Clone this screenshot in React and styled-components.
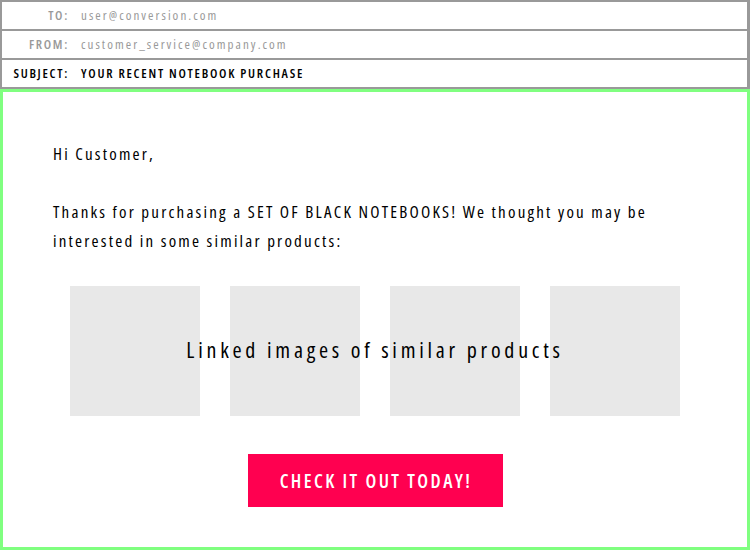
import React from "react";
import styled, { createGlobalStyle } from "styled-components";

const GlobalStyle = createGlobalStyle`
  html, body {
    margin: 0;
    padding: 0;
    background: #fff;
  }
  body {
    font-family: "Open Sans", "DejaVu Sans", sans-serif;
    font-stretch: condensed;
  }
`;

const products = [1, 2, 3, 4];

export default function App() {
  return (
    <>
      <GlobalStyle />
      <Page>
        <Header>
          <HeaderRow>
            <Label>TO:</Label>
            <Value>user@conversion.com</Value>
          </HeaderRow>
          <HeaderRow>
            <Label>FROM:</Label>
            <Value>customer_service@company.com</Value>
          </HeaderRow>
          <HeaderRow>
            <Label $strong>SUBJECT:</Label>
            <Value $strong>YOUR RECENT NOTEBOOK PURCHASE</Value>
          </HeaderRow>
        </Header>

        <Body>
          <Text>Hi Customer,</Text>
          <Text>
            Thanks for purchasing a SET OF BLACK NOTEBOOKS! We thought you may be
            <br />
            interested in some similar products:
          </Text>

          <Products>
            {products.map((p) => (
              <ProductTile key={p} />
            ))}
            <ProductsCaption>Linked images of similar products</ProductsCaption>
          </Products>

          <ButtonRow>
            <CtaButton>CHECK IT OUT TODAY!</CtaButton>
          </ButtonRow>
        </Body>
      </Page>
    </>
  );
}

const Page = styled.main`
  width: 750px;
  height: 550px;
  display: flex;
  flex-direction: column;
  overflow: hidden;
`;

const Header = styled.section`
  border: 2px solid #999;
  border-right-width: 3px;
  border-bottom: none;
`;

const HeaderRow = styled.div`
  height: 27px;
  border-bottom: 2px solid #999;
  display: grid;
  grid-template-columns: 67px 1fr;
  column-gap: 12px;
  align-items: center;
  font-size: 13px;
  line-height: 1;
`;

const Label = styled.span`
  text-align: right;
  color: ${(p) => (p.$strong ? "#000" : "#999")};
  font-weight: 600;
  letter-spacing: 1.7px;
`;

const Value = styled.span`
  color: ${(p) => (p.$strong ? "#000" : "#999")};
  font-weight: ${(p) => (p.$strong ? 600 : 500)};
  letter-spacing: ${(p) => (p.$strong ? "1.75px" : "2.05px")};
`;

const Body = styled.section`
  flex: 1;
  border: 3px solid #80ff80;
  padding: 47px 50px 0;
  display: flex;
  flex-direction: column;
`;

const Text = styled.p`
  margin: 0 0 29px;
  font-size: 17px;
  font-weight: 500;
  line-height: 29px;
  color: #000;
  letter-spacing: 2.2px;
`;

const Products = styled.div`
  position: relative;
  align-self: flex-start;
  margin: 2px 0 0 17px;
  display: flex;
  gap: 30px;
`;

const ProductTile = styled.div`
  width: 130px;
  height: 130px;
  background: #e8e8e8;
`;

const ProductsCaption = styled.div`
  position: absolute;
  inset: 0;
  padding-bottom: 4px;
  display: flex;
  align-items: center;
  justify-content: center;
  font-size: 22px;
  font-weight: 500;
  letter-spacing: 3.75px;
  color: #000;
`;

const ButtonRow = styled.div`
  display: flex;
  justify-content: center;
  margin-top: 38px;
`;

const CtaButton = styled.a`
  width: 255px;
  height: 53px;
  padding-left: 2px;
  box-sizing: border-box;
  display: flex;
  align-items: center;
  justify-content: center;
  background: #ff0050;
  color: #fff;
  font-size: 19px;
  font-weight: 600;
  letter-spacing: 2.4px;
  cursor: pointer;
`;
